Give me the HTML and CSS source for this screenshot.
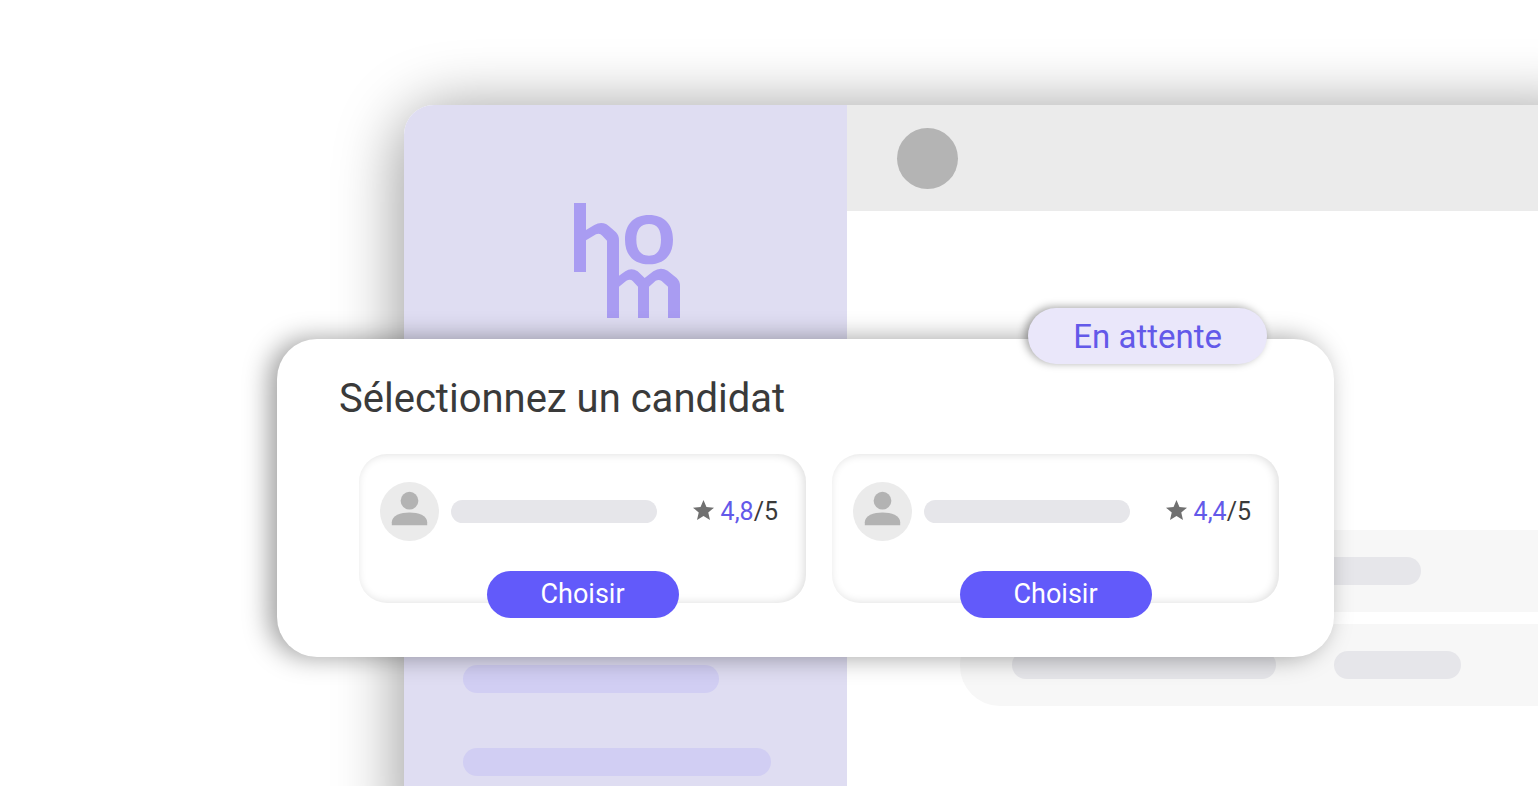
FILE: index.html
```html
<!DOCTYPE html>
<html lang="fr">
<head>
    <meta charset="UTF-8">
    <meta name="viewport" content="width=device-width, initial-scale=1.0">
    <title>Sélectionnez un candidat</title>
    <link rel="stylesheet" href="styles.css">
</head>
<body>
    <div class="app">
        <aside class="sidebar">
            <svg class="logo" viewBox="102 69 318 345" role="img" aria-label="hom">
                <path d="M102 69H138V276H102Z"/>
                <path d="M138 150L163 135Q181 124 198 132Q205 136 228 157Q237 166 237 181V287L256 274Q274 261 293 274L314 294L340 274Q361 260 383 272L410 294Q420 303 420 318V414H384V320L365 303Q357 297 347 302L327 320V414H294V320L278 303Q271 296 259 302L237 320V414H201V182L187 167Q179 158 168 163L138 181Z"/>
                <path fill-rule="evenodd" d="M327 105C372 105 399 132 399 179S372 253 327 253S255 226 255 179S282 105 327 105ZM327 132C302 132 289 149 289 179S302 227 327 227S363 209 363 179S352 132 327 132Z"/>
            </svg>
            <div class="menu">
                <div class="menu-item"></div>
                <div class="menu-item long"></div>
            </div>
        </aside>
        <main class="content">
            <header class="topbar">
                <div class="user"></div>
            </header>
            <div class="list">
                <div class="row">
                    <span class="name short"></span>
                    <span class="status"></span>
                </div>
                <div class="row">
                    <span class="name"></span>
                    <span class="status"></span>
                </div>
            </div>
        </main>
    </div>

    <section class="dialog" aria-labelledby="dialog-title">
        <span class="badge">En attente</span>
        <h1 id="dialog-title">Sélectionnez un candidat</h1>
        <div class="cards">
            <article class="card">
                <div class="candidate">
                    <svg class="avatar" viewBox="0 0 60 60" aria-hidden="true">
                        <circle class="avatar-bg" cx="30" cy="30" r="30"/>
                        <circle cx="30" cy="19" r="9"/>
                        <path d="M12 44V41C12 34 21 31 30 31S48 34 48 41V44Z"/>
                    </svg>
                    <div class="candidate-name"></div>
                    <div class="rating">
                        <svg class="star" viewBox="2 2 20 19" aria-hidden="true">
                            <path d="M12 17.27L18.18 21l-1.64-7.03L22 9.24l-7.19-.61L12 2 9.19 8.63 2 9.24l5.46 4.73L5.82 21z"/>
                        </svg>
                        <span><span class="note">4,8</span>/5</span>
                    </div>
                </div>
                <button type="button">Choisir</button>
            </article>
            <article class="card">
                <div class="candidate">
                    <svg class="avatar" viewBox="0 0 60 60" aria-hidden="true">
                        <circle class="avatar-bg" cx="30" cy="30" r="30"/>
                        <circle cx="30" cy="19" r="9"/>
                        <path d="M12 44V41C12 34 21 31 30 31S48 34 48 41V44Z"/>
                    </svg>
                    <div class="candidate-name"></div>
                    <div class="rating">
                        <svg class="star" viewBox="2 2 20 19" aria-hidden="true">
                            <path d="M12 17.27L18.18 21l-1.64-7.03L22 9.24l-7.19-.61L12 2 9.19 8.63 2 9.24l5.46 4.73L5.82 21z"/>
                        </svg>
                        <span><span class="note">4,4</span>/5</span>
                    </div>
                </div>
                <button type="button">Choisir</button>
            </article>
        </div>
    </section>
</body>
</html>
```
FILE: styles.css
```css
* {
    box-sizing: border-box;
}
body {
    font-family: Roboto, Arial, sans-serif;
    background-color: #fff;
    color: #3a3a3a;
    margin: 0;
    min-height: 100vh;
    padding: 105px 0 0 404px;
    display: flex;
    position: relative;
    overflow: hidden;
}
.app {
    flex: 1;
    display: flex;
    border-radius: 30px 0 0 0;
    background-color: #fff;
    box-shadow: 20px 28px 60px 28px rgba(0, 0, 0, 0.36);
}
.sidebar {
    width: 443px;
    flex-shrink: 0;
    padding: 98px 59px 10px;
    background-color: #dfddf2;
    border-radius: 30px 0 0 0;
}
.logo {
    display: block;
    width: 106px;
    height: 115px;
    margin-left: 111px;
    fill: #a99cf2;
}
.menu {
    display: flex;
    flex-direction: column;
    gap: 55px;
    margin-top: 347px;
}
.menu-item {
    width: 256px;
    height: 28px;
    border-radius: 14px;
    background-color: #d1cef3;
}
.menu-item.long {
    width: 308px;
}
.content {
    flex: 1;
}
.topbar {
    padding: 23px 50px;
    height: 106px;
    background-color: #ebebeb;
}
.user {
    width: 61px;
    height: 61px;
    border-radius: 50%;
    background-color: #b4b4b4;
}
.list {
    display: flex;
    flex-direction: column;
    gap: 12px;
    margin: 319px 0 0 113px;
}
.row {
    display: flex;
    gap: 58px;
    padding: 27px 52px;
    border-radius: 40px 0 0 40px;
    background-color: #f7f7f7;
}
.name,
.status {
    height: 28px;
    border-radius: 14px;
    background-color: #e6e6ea;
}
.name {
    width: 264px;
}
.name.short {
    width: 224px;
}
.status {
    width: 127px;
}
/* Fenêtre de sélection */
.dialog {
    position: absolute;
    top: 339px;
    left: 277px;
    right: 204px;
    padding: 35px 55px 54px 62px;
    border-radius: 40px;
    background-color: #fff;
    box-shadow: -8px 0 26px rgba(0, 0, 0, 0.38);
}
.badge {
    position: absolute;
    top: -31px;
    right: 67px;
    padding: 2px 45px 0;
    line-height: 54px;
    border-radius: 28px;
    font-size: 33px;
    color: #6359e9;
    background-color: #eae7fa;
    box-shadow: -3px -1px 8px rgba(0, 0, 0, 0.36);
}
h1 {
    margin: 0;
    font-size: 40px;
    line-height: 50px;
    font-weight: normal;
}
.cards {
    display: grid;
    grid-template-columns: 1fr 1fr;
    gap: 26px;
    margin: 30px 0 0 20px;
}
.card {
    display: flex;
    flex-direction: column;
    align-items: center;
    gap: 30px;
    height: 149px;
    padding: 28px 28px 0 21px;
    border-radius: 28px;
    box-shadow: inset -2px 0 10px rgba(0, 0, 0, 0.14);
}
.candidate {
    display: flex;
    align-items: center;
    width: 100%;
}
.avatar {
    width: 59px;
    height: 59px;
    fill: #b3b3b3;
}
.avatar-bg {
    fill: #ebebeb;
}
.candidate-name {
    width: 206px;
    height: 23px;
    margin-left: 12px;
    border-radius: 12px;
    background-color: #e6e6ea;
}
.rating {
    display: flex;
    align-items: center;
    gap: 7px;
    margin-left: auto;
    font-size: 25px;
}
.star {
    width: 21px;
    height: 20px;
    margin-bottom: 4px;
    fill: #707070;
}
.note {
    color: #6359e9;
}
button {
    width: 192px;
    height: 47px;
    flex-shrink: 0;
    margin-left: 7px;
    padding: 0 0 2px;
    border: none;
    border-radius: 24px;
    background-color: #625afa;
    color: #fff;
    font-family: inherit;
    font-size: 27px;
    cursor: pointer;
}
```
